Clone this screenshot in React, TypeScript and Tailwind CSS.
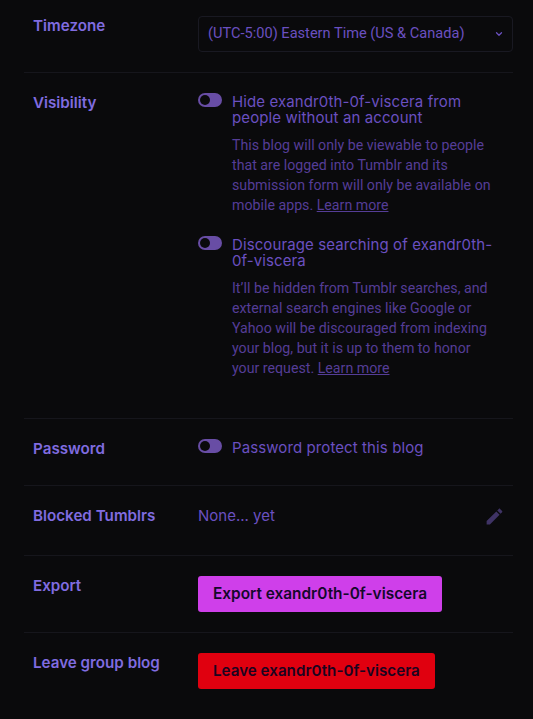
import { ChevronDown } from 'lucide-react';

function Toggle() {
  return (
    <div className="w-6 h-3.5 shrink-0 rounded-full bg-[#684da5] flex items-center pl-[2px]">
      <div className="w-[10px] h-[10px] rounded-full bg-[#0a0a0c]" />
    </div>
  );
}

function Row({ label, children, pt = 'pt-5', pb = 'pb-5' }: { label: string; children: React.ReactNode; pt?: string; pb?: string }) {
  return (
    <div className={`flex border-b border-[#16161c] last:border-b-0 ${pt} ${pb}`}>
      <div className="w-[174px] shrink-0 pl-[9px] text-[15.2px] leading-5 font-semibold text-[#806ce0]">{label}</div>
      <div className="flex-1 min-w-0">{children}</div>
    </div>
  );
}

function Option({ title, children }: { title: string; children?: React.ReactNode }) {
  return (
    <div className="flex gap-2.5 items-start">
      <Toggle />
      <div className="flex-1 pr-[18px]">
        <div className="mt-px text-[15px] leading-4 text-[#6a50c0] tracking-[0.1px]">{title}</div>
        {children && <p className="mt-[9px] font-['Roboto',sans-serif] text-[14.2px] leading-5 text-[#553d97]">{children}</p>}
      </div>
    </div>
  );
}

export default function App() {
  return (
    <div className="font-['Inter',sans-serif] bg-[#0a0a0c] h-[719px] overflow-hidden pl-6 pr-5">
      <Row label="Timezone" pt="pt-4">
        <div className="h-9 rounded border border-[#191922] flex items-center justify-between pl-[9px] pr-[8px] font-['Roboto',sans-serif] text-[14.6px] text-[#6a50c0]">
          <span>(UTC-5:00) Eastern Time (US &amp; Canada)</span>
          <ChevronDown size={10} strokeWidth={3} className="text-[#6a50c0]" />
        </div>
      </Row>
      <Row label="Visibility" pb="pb-[40px]">
        <div className="flex flex-col gap-[21px]">
          <Option title="Hide exandr0th-0f-viscera from people without an account">
            This blog will only be viewable to people that are logged into Tumblr and its submission form will only be available on mobile apps. <a className="underline">Learn more</a>
          </Option>
          <Option title="Discourage searching of exandr0th-0f-viscera">
            It’ll be hidden from Tumblr searches, and external search engines like Google or Yahoo will be discouraged from indexing your blog, but it is up to them to honor your request. <a className="underline">Learn more</a>
          </Option>
        </div>
      </Row>
      <Row label="Password" pb="pb-[26px]">
        <Option title="Password protect this blog" />
      </Row>
      <Row label="Blocked Tumblrs" pb="pb-[29px]">
        <div className="flex items-center justify-between pr-[8px] text-[15px] leading-5 text-[#6a50c0]">
          <span>None... yet</span>
          <svg width="21" height="21" viewBox="0 0 24 24" fill="#3f3365" className="-my-0.5">
            <path d="M3 17.25V21h3.75L17.81 9.94l-3.75-3.75L3 17.25zM20.71 7.04c.39-.39.39-1.02 0-1.41l-2.34-2.34c-.39-.39-1.02-.39-1.41 0l-1.83 1.83 3.75 3.75 1.83-1.83z" />
          </svg>
        </div>
      </Row>
      <Row label="Export">
        <button className="h-9 px-[15px] rounded-[3px] bg-[#cf3fea] text-[15.4px] font-semibold text-[#14082b]">Export exandr0th-0f-viscera</button>
      </Row>
      <Row label="Leave group blog">
        <button className="h-9 px-[15px] rounded-[3px] bg-[#e0000f] text-[15.2px] font-semibold text-[#1a0420]">Leave exandr0th-0f-viscera</button>
      </Row>
    </div>
  );
}
